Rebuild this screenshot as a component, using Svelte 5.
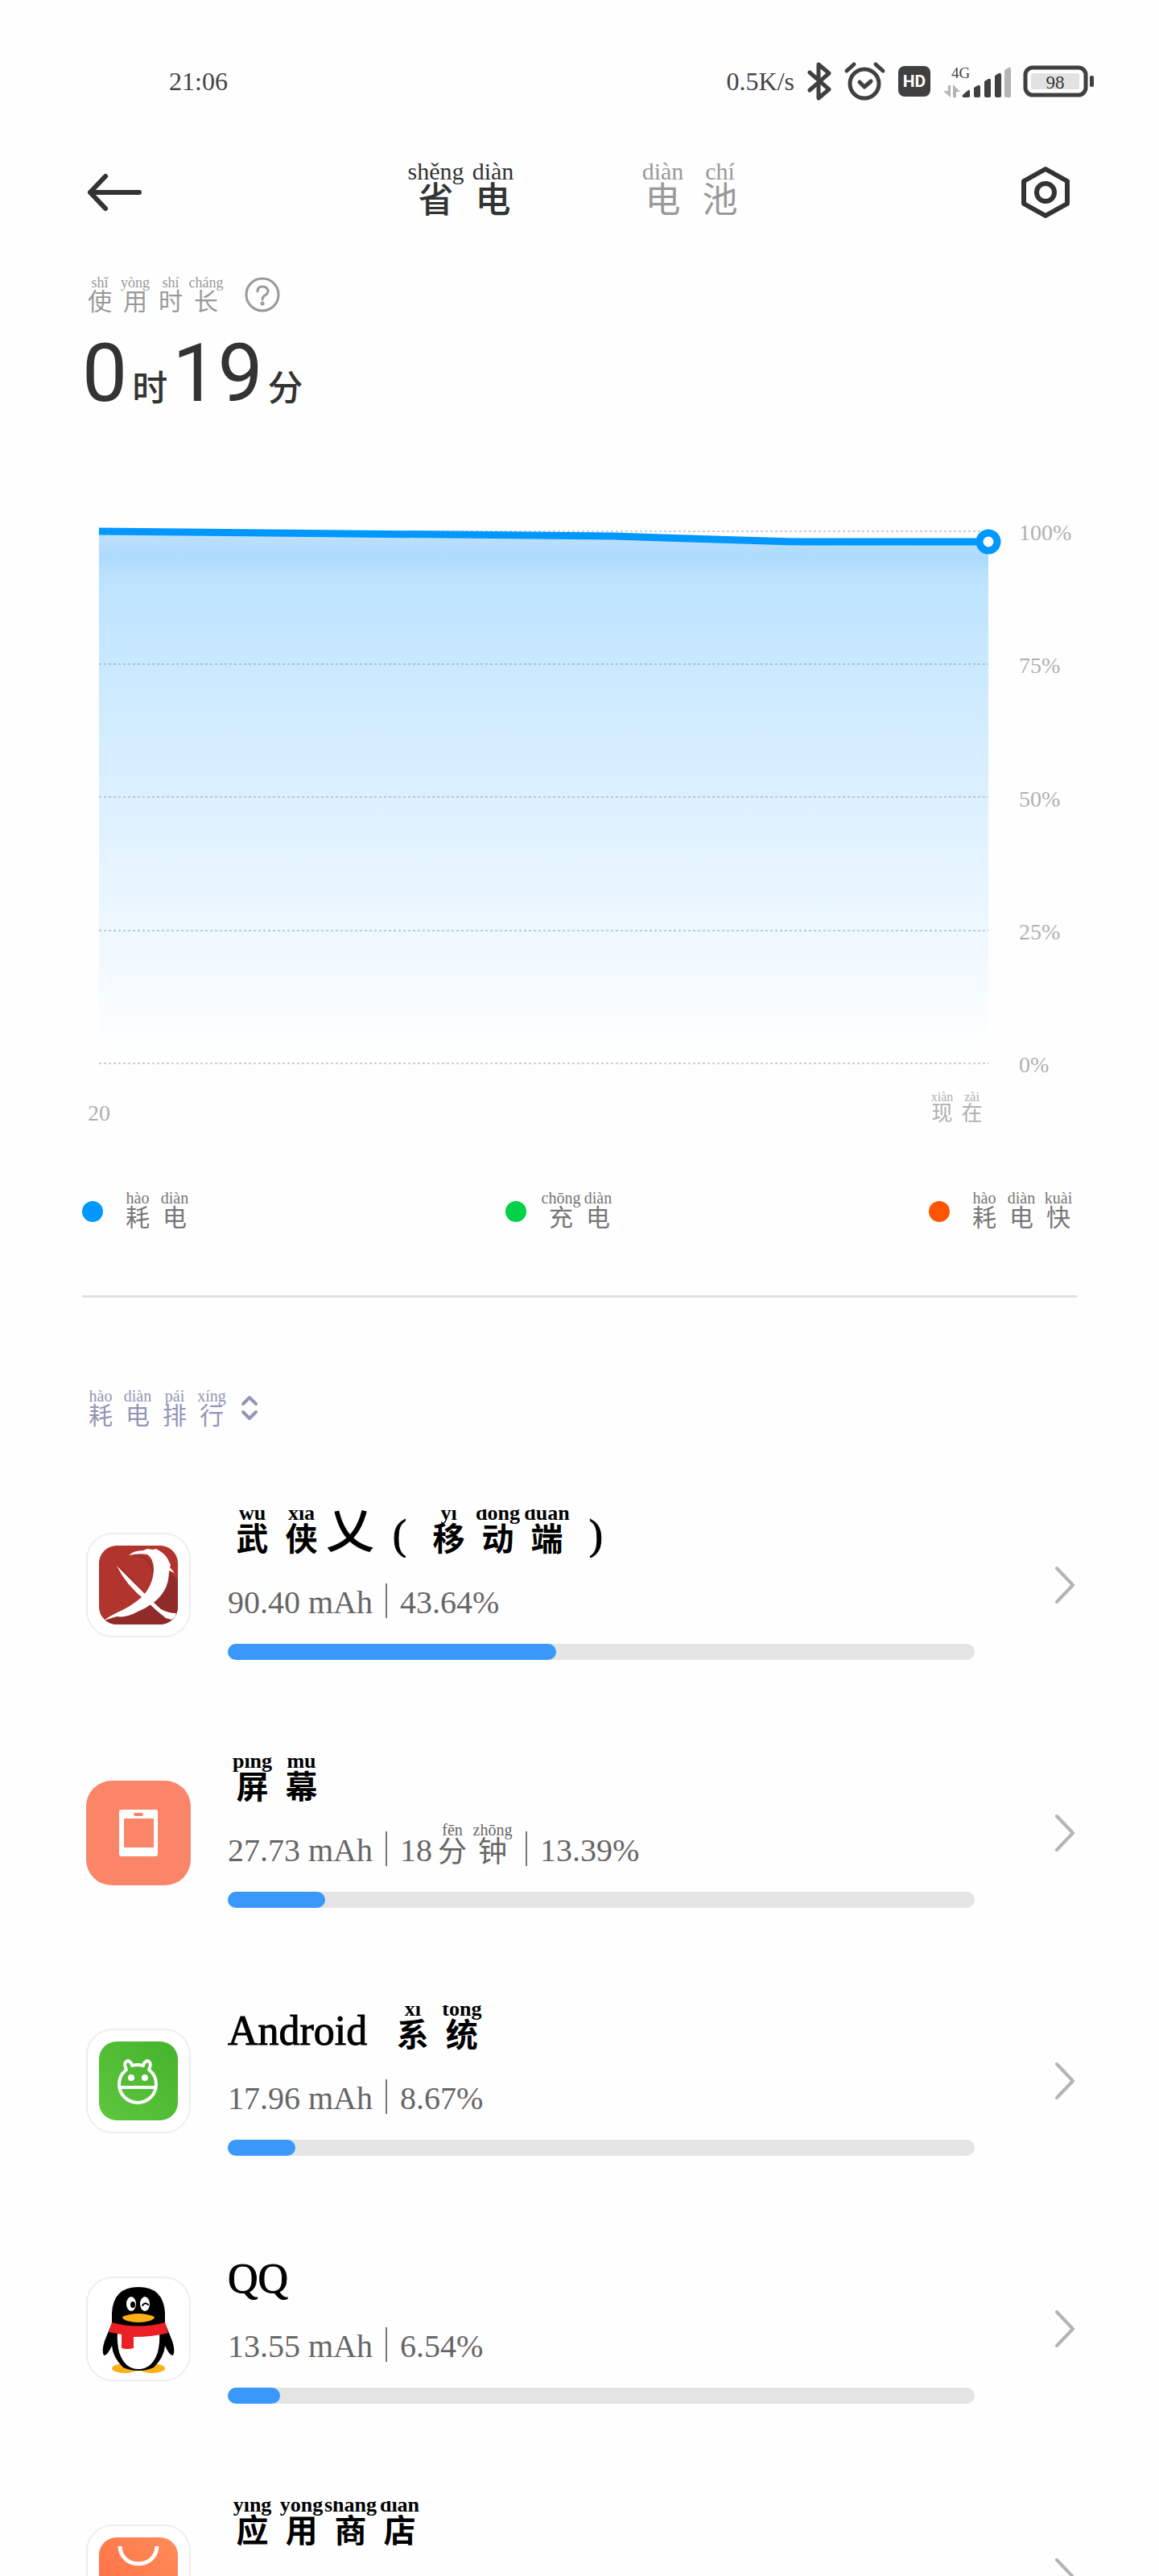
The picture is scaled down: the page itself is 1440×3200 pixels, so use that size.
<script>
  const tabs = [
    { id: "saver", label: [["省", "shěng"], ["电", "diàn"]] },
    { id: "battery", label: [["电", "diàn"], ["池", "chí"]] },
  ]

  const usageLabel = [["使", "shǐ"], ["用", "yòng"], ["时", "shí"], ["长", "cháng"]]
  const nowLabel = [["现", "xiàn"], ["在", "zài"]]
  const rankLabel = [["耗", "hào"], ["电", "diàn"], ["排", "pái"], ["行", "xíng"]]

  const legend = [
    { kind: "drain", label: [["耗", "hào"], ["电", "diàn"]] },
    { kind: "charge", label: [["充", "chōng"], ["电", "diàn"]] },
    { kind: "fast", label: [["耗", "hào"], ["电", "diàn"], ["快", "kuài"]] },
  ]

  const levels = [100, 75, 50, 25, 0]
  const gridLines = [0, 165, 330, 496, 661]

  // A name part is either a [hanzi, pinyin] pair or a plain string
  const apps = [
    {
      icon: "wuxia",
      name: [["武", "wǔ"], ["侠", "xiá"], "乂", "(", ["移", "yí"], ["动", "dòng"], ["端", "duān"], ")"],
      power: "90.40 mAh",
      percent: 43.64,
    },
    {
      icon: "screen",
      name: [["屏", "píng"], ["幕", "mù"]],
      power: "27.73 mAh",
      minutes: 18,
      percent: 13.39,
    },
    {
      icon: "android",
      name: ["Android  ", ["系", "xì"], ["统", "tǒng"]],
      power: "17.96 mAh",
      percent: 8.67,
    },
    { icon: "qq", name: ["QQ"], power: "13.55 mAh", percent: 6.54 },
    {
      icon: "store",
      name: [["应", "yìng"], ["用", "yòng"], ["商", "shāng"], ["店", "diàn"]],
    },
  ]

  let activeTab = $state("saver")

  const partClass = part => {
    if (part === "乂") return "wide"
    if (part === "(" || part === ")") return "paren"
    return "latin"
  }
</script>

{#snippet pinyin(chars)}
  {#each chars as [char, sound]}
    <ruby>{char}<rt>{sound}</rt></ruby>
  {/each}
{/snippet}

<div class="screen">
  <div class="status">
    <span>21:06</span>
    <div class="status-icons">
      <span>0.5K/s</span>
      <svg width="30" height="48" viewBox="0 0 30 48" fill="none" stroke="#404040" stroke-width="5" stroke-linecap="round" stroke-linejoin="round">
        <path d="M3 13 27 34 14 45V3l13 11L3 35" />
      </svg>
      <svg width="51" height="48" viewBox="0 0 51 48" fill="none" stroke="#404040" stroke-linecap="round" stroke-linejoin="round">
        <circle cx="25" cy="27" r="18" stroke-width="5" />
        <path d="M19 25l6 6 8-7" stroke-width="5" />
        <path d="M3 11l9-8M39 3l9 8" stroke-width="5" />
      </svg>
      <svg width="40" height="38" viewBox="0 0 40 38">
        <rect width="40" height="38" rx="8" fill="#404040" />
        <text class="hd" x="20" y="26" text-anchor="middle">HD</text>
      </svg>
      <svg width="84" height="44" viewBox="0 0 84 44">
        <text class="network" x="10" y="18">4G</text>
        <path d="M6 27h3v15L0 34h6zM12 42V26l9 9h-5v7z" fill="#b4b4b4" />
        <g fill="#404040">
          <path d="M24 39l7-6q2-1 2 1v6q0 2-2 2h-6q-2 0-1-3z" />
          <path d="M38 30l5-3q3-1 3 2v11q0 2-2 2h-4q-2 0-2-2z" />
          <path d="M51 22l5-3q3-1 3 2v19q0 2-2 2h-4q-2 0-2-2z" />
          <path d="M64 15l5-3q3-1 3 2v26q0 2-2 2h-4q-2 0-2-2z" />
          <path d="M76 8l5-3q3-1 3 2v33q0 2-2 2h-4q-2 0-2-2z" fill="#b4b4b4" />
        </g>
      </svg>
      <svg width="87" height="38" viewBox="0 0 87 38">
        <rect x="2" y="2" width="75" height="34" rx="9" fill="#fff" stroke="#404040" stroke-width="5" />
        <rect x="9" y="9" width="60" height="20" rx="3" fill="#e2e2e2" />
        <rect x="82" y="12" width="5" height="14" rx="2" fill="#404040" />
        <text class="charge-level" x="39" y="28" text-anchor="middle">98</text>
      </svg>
    </div>
  </div>

  <header>
    <button class="plain" aria-label="返回">
      <svg width="70" height="48" viewBox="0 0 70 48" fill="none" stroke="#333" stroke-width="6" stroke-linecap="round" stroke-linejoin="round">
        <path d="M24 4L5 24l19 20M5 24h61" />
      </svg>
    </button>
    <div class="tabs" role="tablist">
      {#each tabs as tab}
        <button
          class="plain tab"
          class:active={activeTab === tab.id}
          role="tab"
          aria-selected={activeTab === tab.id}
          onclick={() => (activeTab = tab.id)}
        >
          {@render pinyin(tab.label)}
        </button>
      {/each}
    </div>
    <button class="plain end" aria-label="设置">
      <svg width="60" height="64" viewBox="0 0 60 64" fill="none" stroke="#333" stroke-width="6" stroke-linejoin="round">
        <path d="M30 3L57 18V46L30 61 3 46V18z" />
        <circle cx="30" cy="32" r="11" />
      </svg>
    </button>
  </header>

  <main>
    <div class="usage">
      <div class="usage-label">{@render pinyin(usageLabel)}</div>
      <button class="plain" aria-label="帮助">
        <svg width="44" height="44" viewBox="0 0 44 44" fill="none" stroke="#999" stroke-width="3" stroke-linecap="round">
          <circle cx="22" cy="22" r="20" />
          <path d="M16 18q0-6 6-6t7 5q0 4-4 6-3 2-3 5" />
          <circle cx="22" cy="33" r="1" />
        </svg>
      </button>
    </div>
    <div class="duration">
      <span class="digits">0</span><span class="unit">时</span><span class="digits">19</span><span class="unit">分</span>
    </div>

    <div class="chart">
      <svg class="plot" viewBox="0 0 1105 661" role="img" aria-label="电量">
        <defs>
          <linearGradient id="area" x1="0" y1="0" x2="0" y2="1">
            <stop offset="0" stop-color="#c0e2fb" />
            <stop offset="0.02" stop-color="#b8defb" />
            <stop offset="0.05" stop-color="#addbfd" />
            <stop offset="0.09" stop-color="#bce3fe" />
            <stop offset="0.3" stop-color="#cdeaff" />
            <stop offset="0.6" stop-color="#e3f3ff" />
            <stop offset="0.95" stop-color="#fcfeff" />
            <stop offset="1" stop-color="#fefefe" />
          </linearGradient>
        </defs>
        <path d="M0 0L673 7 856 13H1105V661H0z" fill="url(#area)" />
        {#each gridLines as y}
          <line x1="0" x2="1105" y1={y} y2={y} stroke="#777" stroke-opacity="0.7" stroke-dasharray="3 3" />
        {/each}
        <path d="M0 0L640 6Q673 7 700 8L830 12Q856 13 880 13H1105" fill="none" stroke="#0098ff" stroke-width="9" />
        <circle cx="1105" cy="13" r="11" fill="#fff" stroke="#0098ff" stroke-width="9" />
      </svg>
      <div class="levels">
        {#each levels as level}
          <span>{level}%</span>
        {/each}
      </div>
    </div>
    <div class="axis">
      <span>20</span>
      <div class="now">{@render pinyin(nowLabel)}</div>
    </div>

    <div class="legend">
      {#each legend as entry}
        <div class="legend-item">
          <i class="dot {entry.kind}"></i>
          <div class="legend-label">{@render pinyin(entry.label)}</div>
        </div>
      {/each}
    </div>

    <hr />

    <button class="plain rank">
      <span class="rank-label">{@render pinyin(rankLabel)}</span>
      <svg width="20" height="30" viewBox="0 0 20 30" fill="none" stroke="#9296b4" stroke-width="4" stroke-linecap="round" stroke-linejoin="round">
        <path d="M2 10l8-8 8 8M2 20l8 8 8-8" />
      </svg>
    </button>

    <ul>
      {#each apps as app}
        <li>
          <a href="#{app.icon}">
            <svg class="icon" viewBox="0 0 130 130">
              {#if app.icon !== "screen"}
                <rect x="1" y="1" width="128" height="128" rx="32" fill="#fff" stroke="#eee" stroke-width="2" />
              {/if}
              {#if app.icon === "wuxia"}
                <defs>
                  <clipPath id="tile"><rect x="16" y="16" width="98" height="98" rx="22" /></clipPath>
                </defs>
                <g clip-path="url(#tile)">
                  <rect x="16" y="16" width="98" height="98" fill="#b1342e" />
                  <path d="M104 50L130 72V130H42L24 109 76 92z" fill="#902b29" />
                  <path d="M58 29q12-2 18 4 9 8 7 22-1-16-10-22-6-4-15-4z" fill="#902b29" />
                  <path d="M40 41l18 18 18 20-4 4q-18-16-32-42z" fill="#902b29" />
                </g>
                <path d="M53 28q6-6 18-6l5-2 7 1 4-1 5 3q8 5 11 13l2 4-1 3 6 7-7-3q0 15-6 25-6 10-15 16-8 6-18 10-14 8-26 6L22 109q6-5 15-9 20-9 32-20 14-14 15-34Q84 32 76 27q-10-2-23 1z" fill="#fff" />
                <path d="M38 41l15 15 14 14 13 13 13 12q9 5 19 5l-2 5-4 3-7-2Q86 96 74 84 50 66 38 41z" fill="#fff" />
              {:else if app.icon === "screen"}
                <rect width="130" height="130" rx="32" fill="#fa8568" />
                <rect x="41" y="36" width="48" height="58" rx="3" fill="#fff" />
                <rect x="47" y="47" width="37" height="36" fill="#fa8568" />
                <rect x="59" y="40" width="12" height="4" rx="2" fill="#fa8568" />
              {:else if app.icon === "android"}
                <defs>
                  <linearGradient id="green" x1="0" y1="1" x2="1" y2="0">
                    <stop offset="0" stop-color="#5fc640" />
                    <stop offset="1" stop-color="#44b32b" />
                  </linearGradient>
                </defs>
                <rect x="16" y="16" width="98" height="98" rx="22" fill="url(#green)" />
                <path d="M57 46q-1-4-3-5-3-2-5 1-2 2 1 9-9 7-9 18a23 23 0 0 0 46 0q0-11-9-18 3-7 1-9-2-3-5-1-2 1-3 5-7-2-14 0zM41 73h46" fill="none" stroke="#fff" stroke-width="4" stroke-linejoin="round" />
                <circle cx="56" cy="61" r="4" fill="#fff" />
                <circle cx="73" cy="61" r="4" fill="#fff" />
              {:else if app.icon === "qq"}
                <ellipse cx="48" cy="114" rx="16" ry="6" fill="#fbb116" />
                <ellipse cx="82" cy="114" rx="16" ry="6" fill="#fbb116" />
                <path d="M32 58Q29 65 23 80q-4 12-1 18 4 1 10-12 1 14 14 27 19 8 38 0 13-13 14-27 6 13 10 12 3-6-1-18-6-15-9-22V45Q96 13 65 13T32 45z" />
                <path d="M39 70h52q1 11-2 24-7 21-24 21T41 94q-3-13-2-24z" fill="#fff" />
                <path d="M32 57q33 9 66 0l4 13q-18 5-43 5v14q-8 2-15 0V72l-16-3z" fill="#ec2024" />
                <ellipse cx="56" cy="34" rx="6" ry="9" fill="#fff" />
                <ellipse cx="73" cy="34" rx="6" ry="9" fill="#fff" />
                <ellipse cx="58" cy="35" rx="3" ry="4" />
                <path d="M70 36q3-5 7-1" fill="none" stroke="#000" stroke-width="2" stroke-linecap="round" />
                <path d="M45 50q20-8 40 0 0 3-6 5-14 4-28 0-6-2-6-5z" fill="#fbb116" />
              {:else}
                <defs>
                  <linearGradient id="orange" x1="0" y1="1" x2="1" y2="0">
                    <stop offset="0" stop-color="#ff6a42" />
                    <stop offset="1" stop-color="#ff8d5a" />
                  </linearGradient>
                </defs>
                <rect x="16" y="16" width="98" height="98" rx="22" fill="url(#orange)" />
                <path d="M42 27C43 56 87 56 88 27" fill="none" stroke="#fff" stroke-width="5" />
              {/if}
            </svg>
            <div class="info">
              <div class="name">
                {#each app.name as part}
                  {#if typeof part === "string"}
                    <span class={partClass(part)}>{part}</span>
                  {:else}
                    {@render pinyin([part])}
                  {/if}
                {/each}
              </div>
              {#if app.power}
                <div class="stats">
                  <span>{app.power}</span>
                  <i class="separator"></i>
                  {#if app.minutes}
                    <span>{app.minutes}</span>
                    {@render pinyin([["分", "fēn"], ["钟", "zhōng"]])}
                    <i class="separator"></i>
                  {/if}
                  <span>{app.percent}%</span>
                </div>
                <div class="bar">
                  <div class="bar-fill" style="width: {Math.round(app.percent)}%"></div>
                </div>
              {/if}
            </div>
            <svg class="chevron" viewBox="0 0 24 46" fill="none" stroke="#b4b4b4" stroke-width="4" stroke-linecap="round" stroke-linejoin="round">
              <path d="M2 2l20 21L2 44" />
            </svg>
          </a>
        </li>
      {/each}
    </ul>
  </main>
</div>

<style>
  :global(body) {
    background: #fefefe;
  }

  .screen {
    height: 100vh;
    overflow: hidden;
    font-family: "Liberation Serif", "Noto Sans CJK SC", serif;
    color: #333;
  }

  svg {
    display: block;
    flex: none;
    overflow: visible;
  }

  .plain {
    display: flex;
    align-items: center;
    padding: 0;
    border: 0;
    background: none;
    font: inherit;
    color: inherit;
    cursor: pointer;
  }

  ruby {
    display: flex;
    flex: none;
    flex-direction: column-reverse;
    align-items: center;
    line-height: 1;
  }

  rt {
    display: block;
    line-height: 1;
    white-space: nowrap;
  }

  .status {
    display: flex;
    align-items: center;
    justify-content: space-between;
    height: 78px;
    padding: 62px 81px 0 210px;
    font-size: 32px;
    color: #444;
  }

  .status-icons {
    display: flex;
    align-items: center;
    gap: 16px;
  }

  .hd {
    font: 700 21px Roboto, sans-serif;
    fill: #fff;
  }

  .network {
    font-size: 19px;
    fill: #444;
  }

  .charge-level {
    font-size: 23px;
    fill: #333;
  }

  header {
    display: grid;
    grid-template-columns: 80px 1fr 80px;
    height: 82px;
    margin-top: 58px;
    padding: 0 111px 0 107px;
  }

  .end {
    justify-content: flex-end;
  }

  .tabs {
    display: flex;
    align-items: flex-start;
    justify-content: center;
    gap: 140px;
  }

  .tab {
    font-size: 44px;
    color: #999;
  }

  .tab.active {
    color: #333;
    font-weight: 500;
  }

  .tab ruby {
    width: 71px;
  }

  .tab rt {
    font-size: 30px;
  }

  main {
    padding: 62px 102px 0;
  }

  .usage {
    display: flex;
    align-items: center;
    gap: 26px;
  }

  .usage-label {
    display: flex;
    font-size: 30px;
    color: #999;
  }

  .usage-label ruby {
    width: 44px;
  }

  .usage-label rt {
    font-size: 18px;
  }

  .duration {
    display: flex;
    align-items: baseline;
    gap: 6px;
    margin-top: 24px;
    line-height: 1;
  }

  .digits {
    font-family: Roboto, sans-serif;
    font-size: 100px;
  }

  .unit {
    font-family: "Noto Sans CJK SC", sans-serif;
    font-size: 44px;
    font-weight: 500;
  }

  .chart {
    display: grid;
    grid-template-columns: 1fr 72px;
    gap: 38px;
    margin: 146px 0 0 21px;
  }

  .plot {
    width: 100%;
    height: auto;
  }

  .levels {
    display: flex;
    flex-direction: column;
    justify-content: space-between;
    margin: -12px 0 -16px;
    font-size: 28px;
    line-height: 28px;
    color: #b0b0b0;
  }

  .axis {
    display: flex;
    align-items: flex-end;
    justify-content: space-between;
    margin-top: 34px;
    padding: 0 112px 0 7px;
    font-size: 28px;
    line-height: 28px;
    color: #b0b0b0;
  }

  .now {
    display: flex;
    font-size: 26px;
  }

  .now ruby {
    width: 37px;
  }

  .now rt {
    font-size: 16px;
  }

  .legend {
    display: grid;
    grid-template-columns: 1fr 1fr 184px;
    margin-top: 81px;
  }

  .legend-item {
    display: flex;
    align-items: center;
    gap: 20px;
  }

  .dot {
    width: 26px;
    height: 26px;
    margin-top: 4px;
    border-radius: 50%;
  }

  .drain {
    background: #0098ff;
  }

  .charge {
    background: #00d147;
  }

  .fast {
    background: #ff5500;
  }

  .legend-label,
  .rank-label {
    display: flex;
    font-size: 30px;
    color: #777;
  }

  .legend-label ruby,
  .rank-label ruby {
    width: 46px;
  }

  .legend-label rt,
  .rank-label rt {
    font-size: 20px;
  }

  hr {
    height: 3px;
    margin: 81px 0 112px;
    border: 0;
    background: #e0e0e0;
  }

  .rank {
    gap: 14px;
  }

  .rank-label {
    color: #9296b4;
  }

  ul {
    display: grid;
    gap: 121px;
    margin: 101px 0 0;
    padding: 0;
    list-style: none;
  }

  a {
    display: grid;
    grid-template-columns: 130px 1fr 24px;
    align-items: center;
    padding: 0 3px 0 5px;
    color: inherit;
    text-decoration: none;
  }

  .icon {
    width: 130px;
    height: 130px;
  }

  .info {
    min-height: 187px;
    margin: 0 100px 0 46px;
  }

  /* Fixed height: the tone marks above the name are cut by its top edge */
  .name {
    display: flex;
    align-items: flex-end;
    box-sizing: border-box;
    height: 60px;
    padding-bottom: 2px;
    overflow: hidden;
    font-size: 40px;
    font-weight: 700;
    line-height: 1;
    color: #000;
  }

  .name ruby {
    width: 61px;
  }

  .name rt {
    font-size: 26px;
  }

  .wide {
    width: 61px;
    font-size: 60px;
    font-weight: 500;
  }

  .latin,
  .paren {
    font-size: 52px;
    font-weight: 400;
    white-space: pre;
    -webkit-text-stroke: 1px #000;
  }

  .paren {
    width: 61px;
    text-align: center;
  }

  .stats {
    display: flex;
    align-items: flex-end;
    height: 48px;
    margin: 32px 0 27px;
    font-size: 40px;
    line-height: 48px;
    color: #666;
  }

  .stats ruby {
    width: 50px;
    margin-bottom: 4px;
    font-size: 36px;
  }

  .stats rt {
    font-size: 20px;
  }

  .separator {
    align-self: flex-start;
    width: 2px;
    height: 43px;
    margin: 0 16px;
    background: #777;
  }

  .bar {
    height: 20px;
    border-radius: 10px;
    background: #e4e4e4;
  }

  .bar-fill {
    height: 100%;
    border-radius: 10px;
    background: #3998f9;
  }

  .chevron {
    width: 24px;
    height: 46px;
  }
</style>
